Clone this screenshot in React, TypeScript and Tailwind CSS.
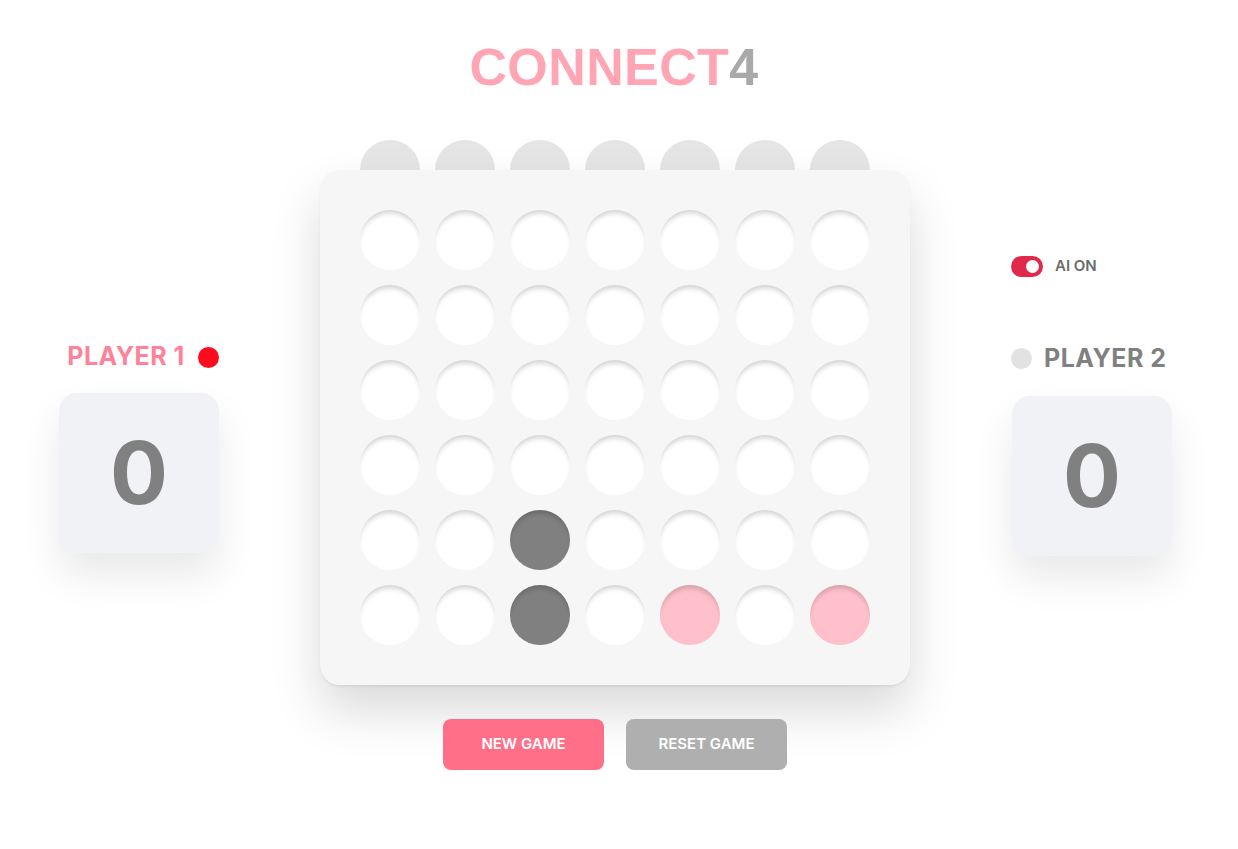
import React from "react";

type Cell = 0 | 1 | 2;

// 0 = empty, 1 = pink (player 1), 2 = gray (player 2 / AI)
const board: Cell[][] = [
  [0, 0, 0, 0, 0, 0, 0],
  [0, 0, 0, 0, 0, 0, 0],
  [0, 0, 0, 0, 0, 0, 0],
  [0, 0, 0, 0, 0, 0, 0],
  [0, 0, 2, 0, 0, 0, 0],
  [0, 0, 2, 0, 1, 0, 1],
];

const Hole = ({ value }: { value: Cell }) => {
  const color = value === 1 ? "bg-[#ffc0cb]" : value === 2 ? "bg-[#808080]" : "bg-white";
  return (
    <div
      className={`w-[60px] h-[60px] rounded-full ${color} shadow-[inset_0_5px_5px_-2px_rgba(0,0,0,0.18)]`}
    />
  );
};

const ScoreBox = ({ score }: { score: number }) => (
  <div className="w-[160px] h-[160px] rounded-[18px] bg-[#f1f2f6] flex items-center justify-center shadow-[0_22px_40px_rgba(0,0,0,0.09)]">
    <span className="text-[86px] font-bold text-[#808080] leading-none">{score}</span>
  </div>
);

const App = () => {
  return (
    <div className="min-h-screen bg-white font-['Inter',sans-serif] pr-[7px]">
      <div className="flex flex-col items-center pt-[41px]">
        <h1 className="h-[52px] leading-[52px] text-[52px] font-bold font-['Liberation_Sans',Arial,sans-serif] tracking-[0.4px] -ml-[3px]">
          <span className="text-[#ffa5b4]">CONNECT</span>
          <span className="text-[#a9a9a9]">4</span>
        </h1>

        <div className="flex items-start mt-[47px]">
          {/* Player 1 */}
          <div className="w-[160px] flex flex-col items-center mt-[202px]">
            <div className="flex items-center h-[30px] pl-[8px] w-max whitespace-nowrap">
              <span className="text-[25px] font-bold text-[#ff8299] tracking-[0.5px]">PLAYER 1</span>
              <span className="ml-[13px] w-[21px] h-[21px] rounded-full bg-[#ff0b1d] shrink-0" />
            </div>
            <div className="mt-[21px]">
              <ScoreBox score={0} />
            </div>
          </div>

          {/* Board */}
          <div className="ml-[101px] mr-[102px] flex flex-col items-center">
            <div className="flex gap-[15px] h-[30px] overflow-hidden">
              {board[0].map((_, i) => (
                <div key={i} className="w-[60px] h-[60px] rounded-full bg-[#e5e5e5] shrink-0" />
              ))}
            </div>
            <div className="w-[590px] p-[40px] rounded-[20px] bg-[#f6f6f6] shadow-[0_2px_2px_rgba(0,0,0,0.06),0_26px_50px_rgba(0,0,0,0.15)]">
              <div className="grid grid-cols-7 gap-[15px]">
                {board.flat().map((v, i) => (
                  <Hole key={i} value={v} />
                ))}
              </div>
            </div>
            <div className="flex gap-[22px] mt-[34px]">
              <button className="w-[161px] h-[51px] rounded-[8px] bg-[#ff7088] text-white text-[15px] font-semibold">
                NEW GAME
              </button>
              <button className="w-[161px] h-[51px] rounded-[8px] bg-[#afafaf] text-white text-[15px] font-semibold">
                RESET GAME
              </button>
            </div>
          </div>

          {/* Player 2 */}
          <div className="w-[160px] flex flex-col mt-[115px]">
            <div className="flex items-center gap-[12px] -ml-[1px]">
              <div className="w-[32px] h-[21px] rounded-full bg-[#e0294b] flex items-center justify-end pr-[4px]">
                <div className="w-[13px] h-[13px] rounded-full bg-white" />
              </div>
              <span className="text-[15px] font-semibold text-[#6b6b6b]">AI ON</span>
            </div>
            <div className="flex items-center h-[30px] mt-[66px] -ml-[1px] w-max whitespace-nowrap">
              <span className="w-[21px] h-[21px] rounded-full bg-[#e2e2e2] shrink-0" />
              <span className="ml-[12px] text-[25px] font-bold text-[#808080] tracking-[0.5px]">PLAYER 2</span>
            </div>
            <div className="mt-[22px]">
              <ScoreBox score={0} />
            </div>
          </div>
        </div>
      </div>
    </div>
  );
};

export default App;
